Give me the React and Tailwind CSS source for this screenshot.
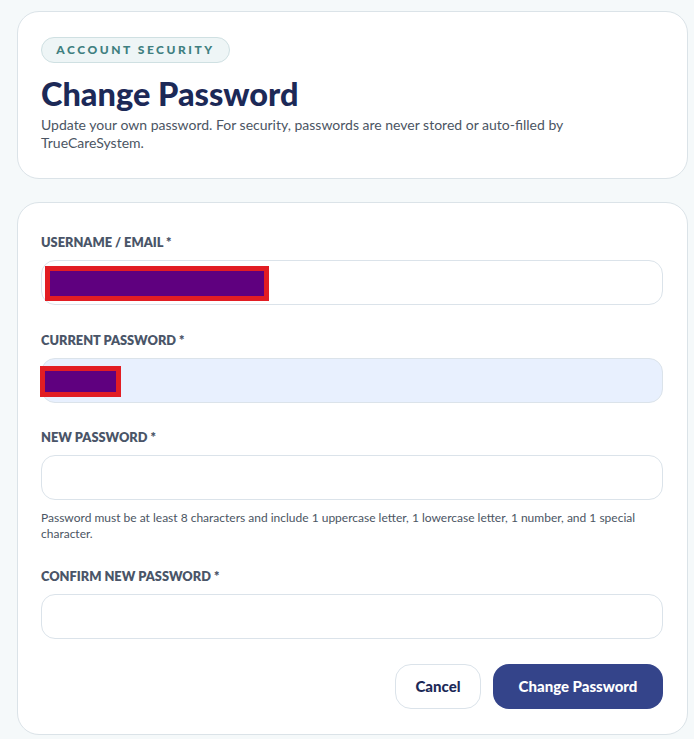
import React from "react";

const Field = ({ label, bg = "bg-white", children }) => (
  <div>
    <p className="text-[12.8px] leading-4 font-extrabold text-[#4a5568]">{label}</p>
    <div className={`relative mt-[10px] h-[45px] rounded-[14px] border border-[#dbe3ea] ${bg}`}>
      {children}
    </div>
  </div>
);

const App = () => {
  return (
    <div className="min-h-[739px] bg-[#f5f9fa] pl-[17px] pr-[6px] pt-[11px] pb-1 font-['Lato','Liberation_Sans',sans-serif]">
      <div className="h-[168px] rounded-[22px] border border-[#dbe3e8] bg-white px-[23px] pt-[24px]">
        <span className="inline-flex h-[26px] w-[189px] items-center justify-center rounded-full border border-[#cfe0e2] bg-[#eef5f6] text-[12px] font-black tracking-[0.21em] text-[#3f7f80]">
          ACCOUNT SECURITY
        </span>
        <h1 className="mt-[12px] text-[32.5px] leading-[38px] font-black text-[#1c2957]">Change Password</h1>
        <p className="mt-[3px] text-[14px] leading-[18px] text-[#4b5563]">
          Update your own password. For security, passwords are never stored or auto-filled by
          <br />
          TrueCareSystem.
        </p>
      </div>

      <div className="mt-[23px] rounded-[22px] border border-[#dbe3e8] bg-white pl-[23px] pr-[24px] pt-[31px] pb-[25px]">
        <Field label="USERNAME / EMAIL *">
          <div className="absolute left-[3px] top-[5px] h-[35px] w-[224px] border-[5px] border-[#e21d23] bg-[#5f007f]" />
        </Field>

        <div className="mt-[27px]">
          <Field label="CURRENT PASSWORD *" bg="bg-[#e8f0fe]">
            <div className="absolute left-[-2px] top-[7px] h-[31px] w-[81px] border-[5px] border-[#e21d23] bg-[#5f007f]" />
          </Field>
        </div>

        <div className="mt-[26px]">
          <Field label="NEW PASSWORD *" />
          <p className="mt-[10px] pr-4 text-[12px] leading-4 text-[#4b5563]">
            Password must be at least 8 characters and include 1 uppercase letter, 1 lowercase letter, 1 number, and 1 special character.
          </p>
        </div>

        <div className="mt-[26px]">
          <Field label="CONFIRM NEW PASSWORD *" />
        </div>

        <div className="mt-[25px] flex justify-end gap-3">
          <button className="h-[45px] w-[86px] rounded-[16px] border border-[#dbe3ea] bg-white text-[15px] font-black text-[#1c2957]">
            Cancel
          </button>
          <button className="h-[45px] w-[170px] rounded-[16px] bg-[#34448a] text-[15px] font-black text-white">
            Change Password
          </button>
        </div>
      </div>
    </div>
  );
};

export default App;
